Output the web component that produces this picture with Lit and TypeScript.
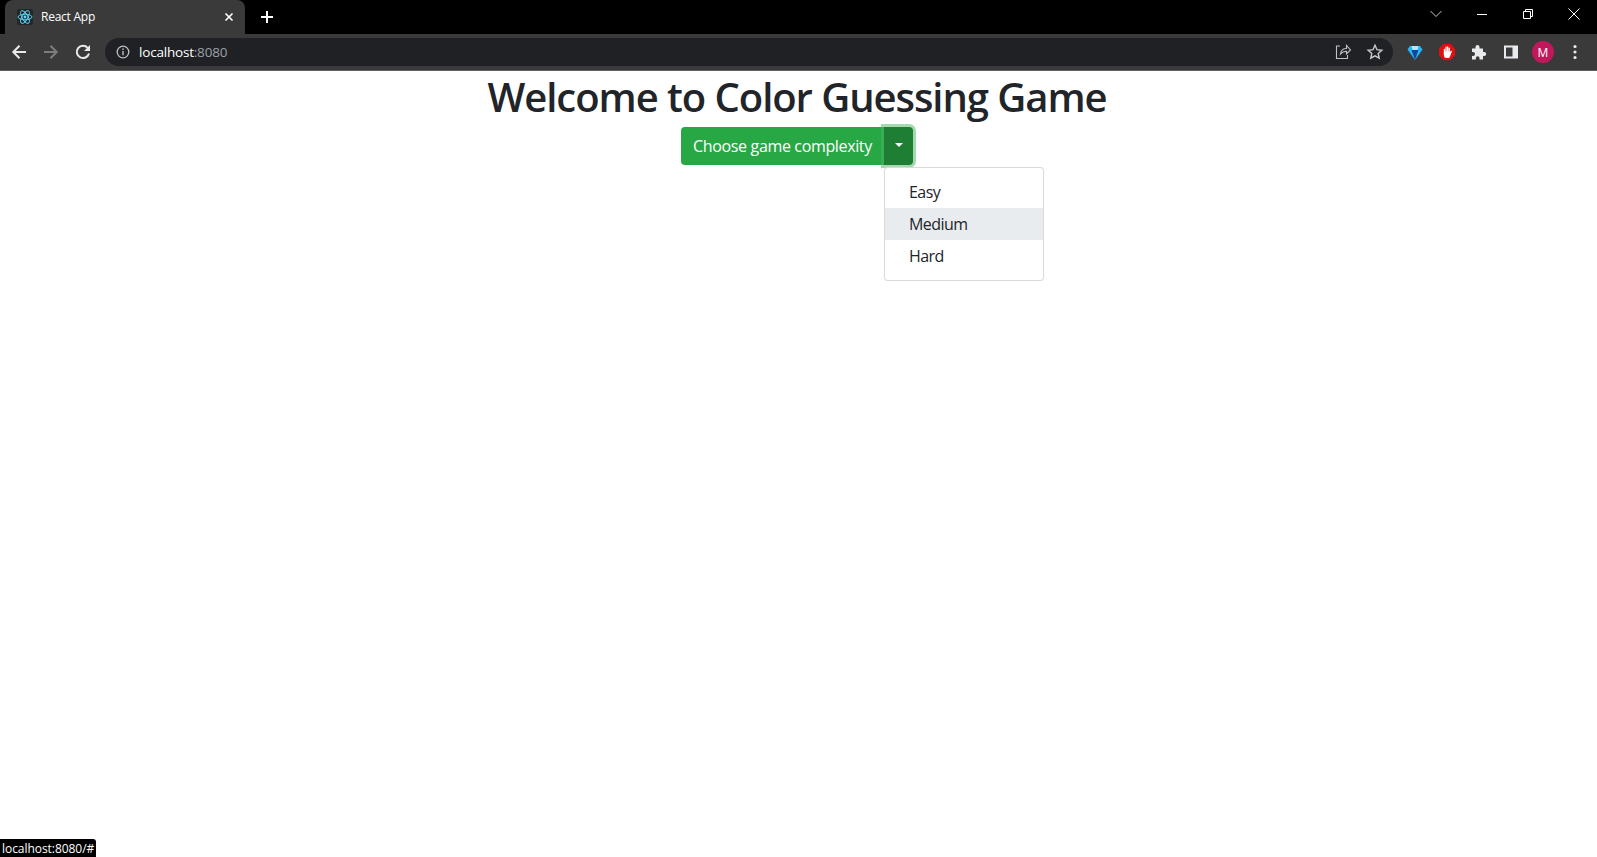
import { LitElement, html, css, svg } from "lit";
import { customElement } from "lit/decorators.js";

const stroke = (d: string, w = 2, c = "#e8eaed") =>
  svg`<path d=${d} fill="none" stroke=${c} stroke-width=${w} />`;

@customElement("app-root")
export class AppRoot extends LitElement {
  static styles = css`
    :host { display: block; height: 857px; position: relative; overflow: hidden; background: #fff; font-family: "Open Sans", "Noto Sans", sans-serif; }
    svg { display: block; flex: none; }
    .strip { height: 34px; background: #000; display: flex; align-items: flex-end; padding-left: 5px; }
    .tab { width: 240px; height: 34px; box-sizing: border-box; background: #3a3a3a; border-radius: 8px 8px 0 0; display: flex; align-items: center; padding: 0 11px 1px 12px; color: #fff; font: 12px "Open Sans", sans-serif; gap: 8px; letter-spacing: -0.25px; }
    .fav { width: 16px; height: 16px; background: #23272a; border-radius: 2px; }
    .tabtitle { flex: 1; }
    .plus { margin: 0 0 3px 8px; }
    .spacer { flex: 1; }
    .wins { display: flex; align-items: center; height: 28px; padding-right: 17px; align-self: flex-start; }
    .wins .chev { margin-right: 35px; }
    .wins .min { margin-right: 36px; }
    .wins .rest { margin-right: 35px; }
    .bar { height: 36px; background: #3a3a3a; border-bottom: 1px solid #5f6060; display: flex; align-items: center; padding-left: 11px; }
    .nav { display: flex; gap: 16px; margin-right: 14px; }
    .omni { width: 1288px; height: 28px; border-radius: 14px; background: #202124; display: flex; align-items: center; padding: 0 9px 0 11px; box-sizing: border-box; font: 13.5px "Open Sans", sans-serif; letter-spacing: -0.2px; }
    .url { margin-left: 9px; color: #fff; flex: 1; }
    .url span { color: #9aa0a6; }
    .omni-icons { display: flex; gap: 14px; align-items: center; }
    .exts { display: flex; align-items: center; gap: 14px; margin-left: 13px; }
    .avatar { width: 22px; height: 22px; margin: 0 -2px; border-radius: 50%; background: #c2185b; color: #fff; font: 12px "Open Sans", sans-serif; display: flex; align-items: center; justify-content: center; }
    .page { display: flex; flex-direction: column; align-items: center; padding-right: 3px; }
    h1 { margin: 0 0 4px; font: 600 40px/52px "Open Sans", sans-serif; color: #212529; letter-spacing: -1.05px; }
    .group { display: flex; position: relative; }
    .main { width: 203px; height: 38px; background: #28a745; color: #fff; border-radius: 4px 0 0 4px; font-size: 16px; letter-spacing: -0.35px; display: flex; align-items: center; justify-content: center; box-sizing: border-box; }
    .toggle { width: 29px; height: 38px; background: #1e7e34; border-radius: 0 4px 4px 0; box-shadow: 0 0 0 3px rgba(72, 180, 97, 0.5); display: flex; align-items: center; justify-content: center; }
    .caret { width: 0; height: 0; border-top: 4.8px solid #fff; border-left: 4.8px solid transparent; border-right: 4.8px solid transparent; margin-top: -2px; }
    .menu { position: absolute; left: 203px; top: 40px; width: 160px; box-sizing: border-box; background: #fff; border: 1px solid rgba(0, 0, 0, 0.15); border-radius: 4px; padding: 8px 0; }
    .item { height: 32px; padding: 0 24px; display: flex; align-items: center; font-size: 16px; letter-spacing: -0.55px; color: #212529; }
    .item.on { background: #e9ecef; }
    .status { position: absolute; left: 0; bottom: 0; height: 18px; background: #000; color: #fff; font: 12px "Open Sans", sans-serif; letter-spacing: -0.05px; padding: 0 2px; display: flex; align-items: center; border-radius: 0 3px 0 0; }
  `;

  render() {
    return html`
      <div class="strip">
        <div class="tab">
          <div class="fav">
            <svg width="16" height="16" viewBox="0 0 16 16" fill="none" stroke="#61dafb" stroke-width=".9">
              <ellipse cx="8" cy="8" rx="7" ry="2.8" />
              <ellipse cx="8" cy="8" rx="7" ry="2.8" transform="rotate(60 8 8)" />
              <ellipse cx="8" cy="8" rx="7" ry="2.8" transform="rotate(120 8 8)" />
              <circle cx="8" cy="8" r="1.4" fill="#61dafb" stroke="none" />
            </svg>
          </div>
          <span class="tabtitle">React App</span>
          <svg width="10" height="10" viewBox="0 0 10 10">${stroke("M1.5 1.5l7 7M8.5 1.5l-7 7", 1.7, "#fff")}</svg>
        </div>
        <svg class="plus" width="28" height="28" viewBox="0 0 28 28">${stroke("M14 8v12M8 14h12", 2, "#fff")}</svg>
        <div class="spacer"></div>
        <div class="wins">
          <svg class="chev" width="12" height="8" viewBox="0 0 12 8">${stroke("M.5 1l5.5 5.500L11.500 1", 1, "#c8c8c8")}</svg>
          <svg class="min" width="10" height="10" viewBox="0 0 10 10">${stroke("M0 5.500h10", 1, "#fff")}</svg>
          <svg class="rest" width="10" height="10" viewBox="0 0 10 10">${stroke("M.5 2.500h7v7h-7zM2.500 2.500v-2h7v7h-2", 1, "#fff")}</svg>
          <svg class="close" width="12" height="12" viewBox="0 0 12 12">${stroke("M.5 .5l11 11M11.500 .5l-11 11", 1, "#fff")}</svg>
        </div>
      </div>
      <div class="bar">
        <div class="nav">
          <svg width="16" height="16" viewBox="0 0 16 16">${stroke("M15 8H2.500M8.500 1.800L2.300 8l6.200 6.200", 2)}</svg>
          <svg width="16" height="16" viewBox="0 0 16 16">${stroke("M1 8h12.500M7.500 1.800L13.700 8l-6.200 6.200", 2, "#7c7d7e")}</svg>
          <svg width="16" height="16" viewBox="0 0 16 16">${stroke("M14 9.500A6.200 6.200 0 1 1 12.700 3.800", 2)}<path d="M15 1v6h-6z" fill="#e8eaed" /></svg>
        </div>
        <div class="omni">
          <svg width="14" height="14" viewBox="0 0 14 14"><circle cx="7" cy="7" r="5.800" fill="none" stroke="#bdc1c6" stroke-width="1.300" /><path d="M6.300 6h1.400v4.200H6.300zM6.300 3.600h1.400V5H6.300z" fill="#bdc1c6" /></svg>
          <div class="url">localhost<span>:8080</span></div>
          <div class="omni-icons">
            <svg width="18" height="18" viewBox="0 0 18 18">${stroke("M6 3H2.500v12.500h11V12M6.500 11c.5-4 3-5.500 6-5.500V2.500l4 4.500-4 4V8.200c-2.500 0-4.500.8-6 2.800z", 1.100, "#bdc1c6")}</svg>
            <svg width="18" height="18" viewBox="0 0 18 18">${stroke("M9 2.200l2 4.500 4.800.5-3.600 3.200 1 4.800L9 12.800l-4.200 2.400 1-4.800L2.200 7.200 7 6.700z", 1.400, "#c8cacc")}</svg>
          </div>
        </div>
        <div class="exts">
          <svg width="18" height="18" viewBox="0 0 18 18"><path d="M4 3h10l2.500 3.500L9 17 1.500 6.500z" fill="#29b6f6" /><path d="M5.500 7h7L9 17z" fill="#0d47a1" /><path d="M5.500 3h7l-1 4h-5z" fill="#b3e5fc" /></svg>
          <svg width="18" height="18" viewBox="0 0 18 18"><path d="M5.500 1h7L17 5.500v7L12.500 17h-7L1 12.500v-7z" fill="#e01010" /><path d="M5.800 6.500c0-1 1.300-1 1.300 0v2h.3V4.300c0-1 1.300-1 1.300 0v4h.3V4c0-1 1.300-1 1.300 0v4.300h.3v-3c0-1 1.300-1 1.300 0v4l.8-1.300c.5-.7 1.500-.3 1.200.5L12 13.500c-.5 1-1.200 1.500-2.500 1.500H8.500c-1.500 0-2.700-1-2.700-3z" fill="#fff" /></svg>
          <svg width="18" height="18" viewBox="0 0 18 18"><path d="M2 5.500h3.500V4a2 2 0 0 1 4 0v1.500H13V9h1.200a2 2 0 0 1 0 4H13v3.500H9.500V15a1.800 1.800 0 0 0-3.600 0v1.500H2V13h1a2 2 0 0 0 0-4H2z" fill="#e8eaed" /></svg>
          <svg width="18" height="18" viewBox="0 0 18 18"><path d="M2 2.500h14v13H2z" fill="#e8eaed" /><path d="M4 4.500h6.500v9H4z" fill="#3a3a3a" /></svg>
          <div class="avatar">M</div>
          <svg width="18" height="18" viewBox="0 0 18 18" fill="#e8eaed"><circle cx="9" cy="3.500" r="1.600" /><circle cx="9" cy="9" r="1.600" /><circle cx="9" cy="14.500" r="1.600" /></svg>
        </div>
      </div>
      <div class="page">
        <h1>Welcome to Color Guessing Game</h1>
        <div class="group">
          <div class="main">Choose game complexity</div>
          <div class="toggle"><div class="caret"></div></div>
          <div class="menu">
            <div class="item">Easy</div>
            <div class="item on">Medium</div>
            <div class="item">Hard</div>
          </div>
        </div>
      </div>
      <div class="status">localhost:8080/#</div>
    `;
  }
}
